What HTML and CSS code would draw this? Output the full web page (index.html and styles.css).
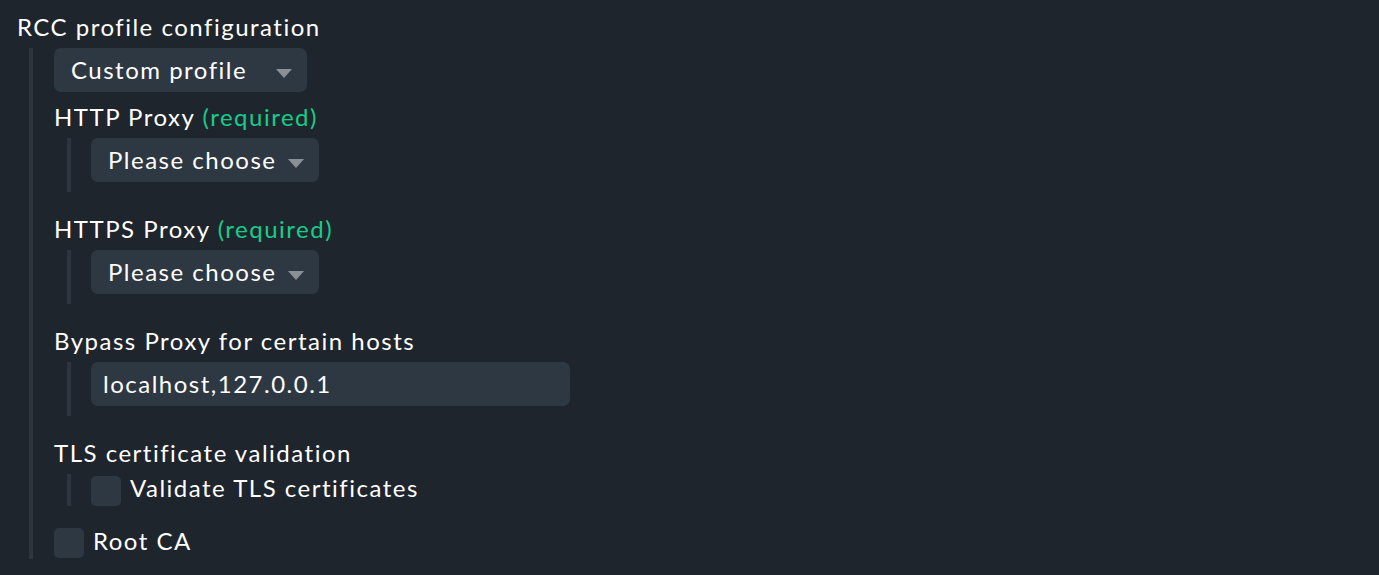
FILE: index.html
```html
<!DOCTYPE html>
<html lang="en">
<head>
<meta charset="utf-8">
<title>RCC profile configuration</title>
<link rel="stylesheet" href="styles.css">
</head>
<body>
<div class="page">
  <div class="title">RCC profile configuration</div>
  <div class="group">
    <div class="select select-wide"><span class="select-text">Custom profile</span><span class="caret"></span></div>

    <div class="entry entry-first">
      <div class="label">HTTP Proxy <span class="req">(required)</span></div>
      <div class="nested">
        <div class="select select-narrow"><span class="select-text">Please choose</span><span class="caret"></span></div>
      </div>
    </div>

    <div class="entry">
      <div class="label">HTTPS Proxy <span class="req">(required)</span></div>
      <div class="nested">
        <div class="select select-narrow"><span class="select-text">Please choose</span><span class="caret"></span></div>
      </div>
    </div>

    <div class="entry">
      <div class="label">Bypass Proxy for certain hosts</div>
      <div class="nested">
        <div class="input">localhost,127.0.0.1</div>
      </div>
    </div>

    <div class="entry">
      <div class="label">TLS certificate validation</div>
      <div class="nested nested-check">
        <div class="check-row"><span class="checkbox"></span><span class="check-label">Validate TLS certificates</span></div>
      </div>
    </div>

    <div class="entry entry-root">
      <div class="check-row"><span class="checkbox"></span><span class="check-label check-label-root">Root CA</span></div>
    </div>
  </div>
</div>
</body>
</html>
```

FILE: styles.css
```css
html, body {
  margin: 0;
  padding: 0;
  background: #1f252c;
}

body {
  font-family: Lato, "Noto Sans", sans-serif;
  font-size: 24px;
  line-height: 27px;
  letter-spacing: 1.5px;
  font-variant-ligatures: none;
  color: #ffffff;
}

.page {
  padding: 13px 0 0 17px;
  height: 562px;
  box-sizing: border-box;
}

.title {
  height: 27px;
}

.group {
  margin: 8px 0 0 12px;
  border-left: 4px solid #2c3540;
  padding: 0 0 1px 21px;
}

.select {
  display: flex;
  align-items: center;
  justify-content: space-between;
  box-sizing: border-box;
  height: 44px;
  padding: 0 15px 2px 17px;
  background: #2e3843;
  border-radius: 7px;
}

.select-wide {
  width: 253px;
}

.select-narrow {
  width: 228px;
}

.caret {
  flex: none;
  width: 0;
  height: 0;
  border-left: 8px solid transparent;
  border-right: 8px solid transparent;
  border-top: 9px solid #8b9096;
  margin-top: 9px;
}

.entry {
  margin-top: 23px;
}

.entry-first {
  margin-top: 11px;
}

.label {
  height: 27px;
}

.req {
  color: #15cd8b;
}

.nested {
  margin: 8px 0 0 13px;
  border-left: 4px solid #2c3540;
  padding: 0 0 10px 20px;
}

.nested-check {
  padding-bottom: 0;
}

.input {
  box-sizing: border-box;
  width: 479px;
  height: 44px;
  padding: 0 12px 2px;
  display: flex;
  align-items: center;
  background: #2e3843;
  border-radius: 7px;
}

.check-row {
  display: flex;
  align-items: flex-start;
}

.checkbox {
  flex: none;
  width: 30px;
  height: 30px;
  margin-top: 2px;
  background: #2e3843;
  border-radius: 5px;
}

.check-label {
  margin-left: 9px;
}

.entry-root {
  margin-top: 22px;
}

.entry-root .checkbox {
  margin-top: 0;
}

.check-label-root {
  margin-left: 9px;
  margin-top: -1px;
}
```
